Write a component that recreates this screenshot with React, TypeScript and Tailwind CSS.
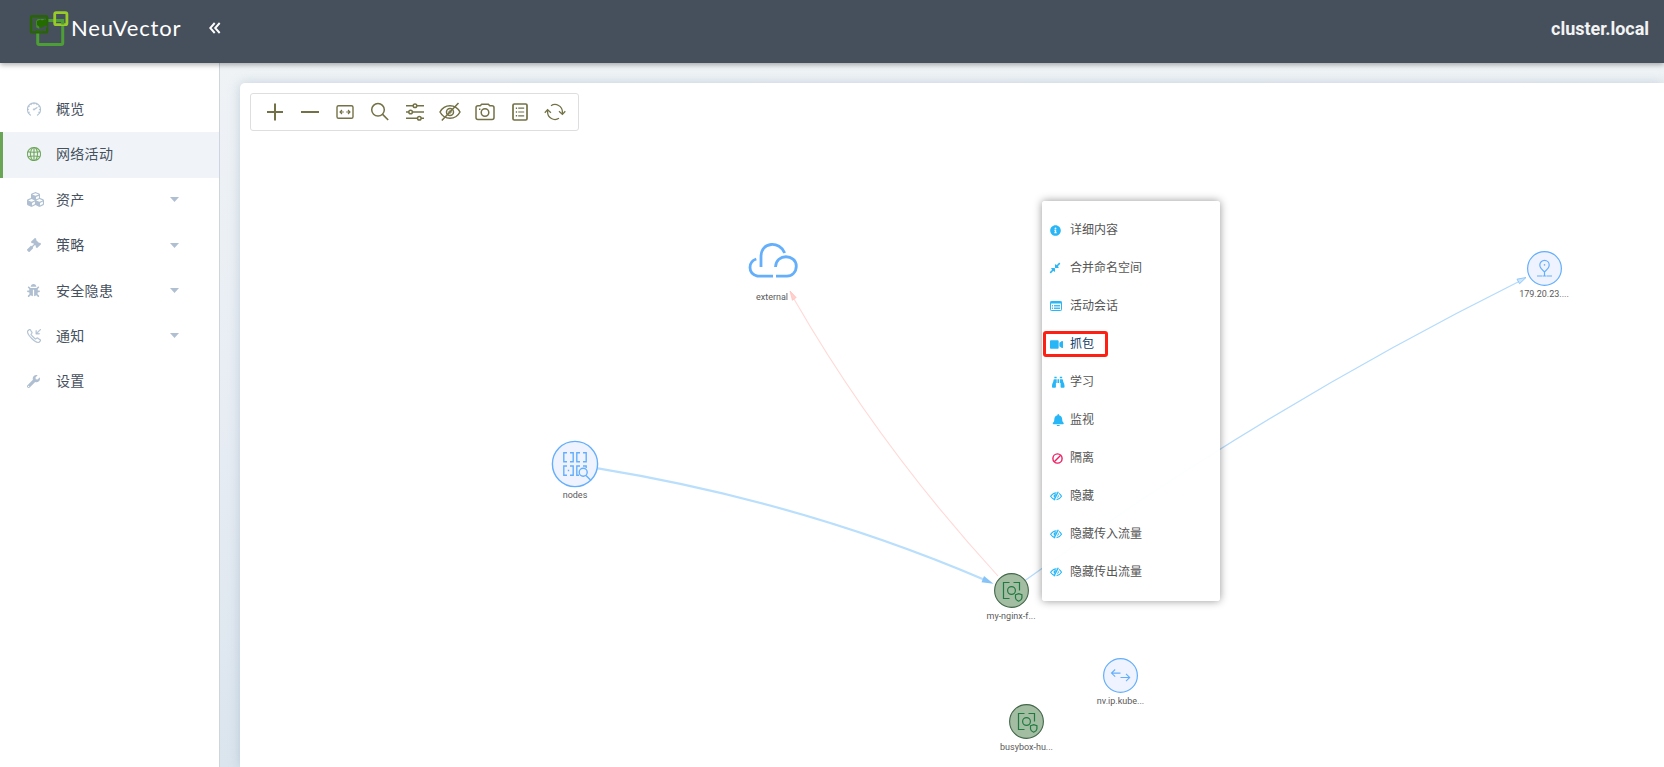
import React from "react";
import { SlSpeedometer, SlGlobe, SlCallIn } from "react-icons/sl";
import {
  FaCubes,
  FaGavel,
  FaBug,
  FaWrench,
  FaInfoCircle,
  FaCompressAlt,
  FaVideo,
  FaBinoculars,
  FaBell,
} from "react-icons/fa";

function Logo() {
  return (
    <svg width="42" height="38" viewBox="0 0 42 38" fill="none">
      <rect x="9.7" y="11.5" width="25" height="24" rx="1.5" stroke="#4d9e36" strokeWidth="3" />
      <rect x="26.7" y="3.7" width="12.2" height="12" rx="1.5" stroke="#98cb27" strokeWidth="2.8" />
      <path d="M28.5 11.5h6.2V15.5" stroke="#4d9e36" strokeWidth="3" />
      <rect x="3" y="7.2" width="16.2" height="16.2" rx="1" fill="#2f6a12" fillOpacity=".25" stroke="#296307" strokeWidth="2.4" />
      <path d="M9 12l3.5-1.5 1.5 1 3-1.5 2 1.5-1 5-5 2.5-4-3z" fill="#256c00" />
      <path d="M7 19l5 2.5 7-4.5" stroke="#46505d" strokeWidth="2" />
      <path d="M8 21.5l4.5 1.5 3-1" stroke="#256c00" strokeWidth="1.6" />
    </svg>
  );
}

function EyeSlash() {
  return (
    <svg width="12" height="12" viewBox="0 0 12 12" fill="none" stroke="currentColor">
      <path d="M5.2 9.6Q2.3 9.1.6 6.2 2.8 2.9 6.6 2.7M9 3.4Q10.6 4.5 11.5 6.2 9.8 9.1 6.5 9.7" strokeWidth="1.1" />
      <path d="M8.3 1.7L4 10.3" strokeWidth="1.3" />
      <path d="M4.4 7.8Q2.8 5.4 4.9 4.2L6.3 4.2zM8.5 5Q9.2 7 7.2 8z" fill="currentColor" strokeWidth=".3" />
    </svg>
  );
}

function ListWindow() {
  return (
    <svg width="12" height="12" viewBox="0 0 12 12" fill="none" stroke="currentColor">
      <rect x=".5" y="1.5" width="11" height="9" rx=".8" />
      <path d="M.5 2.5h11" strokeWidth="2" />
      <path d="M2 5.5h1M4 5.5h6M2 7h1M4 7h6M2 8.5h1M4 8.5h6" strokeWidth=".9" />
    </svg>
  );
}

function Ban() {
  return (
    <svg width="11" height="11" viewBox="0 0 11 11" fill="none" stroke="currentColor" strokeWidth="1.4">
      <circle cx="5.5" cy="5.5" r="4.6" />
      <path d="M8.7 2.3L2.3 8.7" />
    </svg>
  );
}

const navItems = [
  { label: "概览", icon: <SlSpeedometer size={14} stroke="currentColor" strokeWidth={22} />, caret: false },
  { label: "网络活动", icon: <SlGlobe size={14} stroke="currentColor" strokeWidth={14} />, caret: false, active: true },
  { label: "资产", icon: <FaCubes size={17} />, caret: true },
  { label: "策略", icon: <FaGavel size={14} />, caret: true },
  { label: "安全隐患", icon: <FaBug size={13} />, caret: true },
  { label: "通知", icon: <SlCallIn size={14} stroke="currentColor" strokeWidth={22} />, caret: true },
  { label: "设置", icon: <FaWrench size={13} />, caret: false },
];

function Sidebar() {
  return (
    <nav className="flex w-[220px] shrink-0 flex-col border-r border-[#cfd6db] bg-white pt-6">
      {navItems.map((item) => (
        <div
          key={item.label}
          className={
            item.active
              ? "flex h-[46px] items-center border-l-3 border-[#6aa556] bg-[#f0f4f8] pb-[2px] pl-6 text-[#6aa556]"
              : "flex h-[45.3px] items-center pb-[2px] pl-[27px] text-[#afbfd1]"
          }
        >
          <span className="flex w-[29px] items-center">{item.icon}</span>
          <span className="flex-1 text-sm tracking-[0.3px] text-[#46515e]">{item.label}</span>
          {item.caret && (
            <svg className="mr-[40px]" width="9" height="5" viewBox="0 0 9 5" fill="currentColor">
              <path d="M0 0h9L4.5 5z" />
            </svg>
          )}
        </div>
      ))}
    </nav>
  );
}

const tools: React.ReactNode[] = [
  <path d="M3 11h16M11 2.5v17" strokeWidth="2" />,
  <path d="M2 11h18" strokeWidth="2" />,
  <>
    <rect x="3" y="4.7" width="16" height="12.6" rx="1.6" strokeWidth="1.4" />
    <path d="M9.8 11H6M8 9l-2 2 2 2M12.2 11H16M14 9l2 2-2 2" strokeWidth="1.1" />
  </>,
  <>
    <circle cx="9" cy="8.8" r="6.3" />
    <path d="M13.6 13.4l5.6 5.6" strokeWidth="1.6" />
  </>,
  <>
    <path d="M2 4.8h7M13 4.8h7M2 11h2.8M8.5 11H20M2 17.3h11.4M17 17.3h3" />
    <circle cx="11" cy="4.8" r="1.8" />
    <circle cx="6.6" cy="11" r="1.8" />
    <circle cx="15.3" cy="17.3" r="1.8" />
  </>,
  <>
    <path d="M1 11C5.5 2.6 16.5 2.6 21 11 16.5 19.4 5.5 19.4 1 11zM19.5 2L2.8 19.6" />
    <circle cx="11" cy="11" r="3.5" />
    <circle cx="11" cy="11" r="1.2" strokeWidth="1" />
  </>,
  <>
    <path d="M4 4.8h2.2l1.5-1.6h6.6l1.5 1.6H18q2 0 2 2v9.7q0 2-2 2H4q-2 0-2-2V6.8q0-2 2-2z" />
    <circle cx="11" cy="11.5" r="3.8" />
    <path d="M5 8.2h1.4" strokeWidth="1.6" />
  </>,
  <>
    <rect x="4" y="3" width="14" height="16" rx="1.3" strokeWidth="1.7" />
    <path d="M9.2 7.2h6M9.2 11h6M9.2 14.8h6" strokeWidth="1.2" />
    <path d="M6.8 7.2h1.3M6.8 11h1.3M6.8 14.8h1.3" />
  </>,
  <g strokeWidth="1.3">
    <path d="M7 4.7A7.4 7.4 0 0 1 18.4 11v2M15 10.2l3.4 3.2 2.9-3.2" />
    <path d="M15 17.3A7.4 7.4 0 0 1 3.6 11V9M.8 11.8l2.8-3.2 3.3 3.2" />
  </g>,
];

function Toolbar() {
  return (
    <div className="absolute top-[10px] left-[10px] flex h-[38px] w-[329px] items-center gap-[13px] rounded-[3px] border border-[#dedede] bg-white pl-[13px]">
      {tools.map((shape, i) => (
        <svg key={i} width="22" height="22" viewBox="0 0 22 22" fill="none" stroke="#737146" strokeWidth="1.5">
          {shape}
        </svg>
      ))}
    </div>
  );
}

function Edges() {
  return (
    <svg className="absolute inset-0" width="1424" height="684" viewBox="240 83 1424 684" fill="none">
      <path d="M598 468.4Q803 502 985 580" stroke="#b9dffc" strokeWidth="2.2" />
      <path d="M993.5 583.7L981.5 582.3 984 576z" fill="#85c3f8" />
      <path d="M794 299Q878 445 998 576" stroke="#ffd9d6" strokeWidth="1.1" />
      <path d="M790 291L796.2 297.5 792.4 300.3z" fill="#ffd0cc" stroke="#ffbdb7" strokeWidth=".7" />
      <path d="M1025 580.5Q1263 409 1520 281" stroke="#b5dbfb" strokeWidth="1.3" />
      <path d="M1526 277.5L1519.6 283.7 1517 279.2z" fill="#cfe7fd" stroke="#85c3f8" strokeWidth=".9" />
    </svg>
  );
}

function Label({ children }: { children: React.ReactNode }) {
  return <span className="text-[9px] leading-[11px] whitespace-nowrap text-[#5a5a5a]">{children}</span>;
}

function ContainerNode() {
  return (
    <svg width="35" height="35" viewBox="-17.5 -17.5 35 35" fill="none" stroke="#1f7a3f" strokeWidth="1.2">
      <circle r="16.9" fill="#a3bda3" stroke="#43684a" strokeWidth="1.1" />
      <path d="M-2-8H-8V8H-2M2-8H8V0" />
      <circle r="3.9" />
      <path d="M4 4.2L7.2 3.2 10.4 4.2V7.5Q10.2 9.5 7.2 10.7 4.2 9.5 4 7.5z" fill="#a3bda3" />
    </svg>
  );
}

function Graph() {
  return (
    <>
      <Edges />
      <div className="absolute top-[158px] left-[492px] flex w-20 flex-col items-center gap-[11px]">
        <svg className="-ml-px" width="52" height="40" viewBox="0 0 52 40" fill="none" stroke="#64affc" strokeWidth="2.8">
          <path d="M10.3 18Q4 20 4 26.5T11.5 35.2H27M15 26V16C15 0 34 0 38.7 12M29.5 26C30 12 50 13 50.3 25 50.3 31 46 35.2 41 35.2H30" />
        </svg>
        <Label>external</Label>
      </div>
      <div className="absolute top-[357px] left-[295px] flex w-20 flex-col items-center gap-[2px]">
        <svg width="48" height="48" viewBox="-24 -24 48 48" fill="none" stroke="#64affc" strokeWidth="1.4">
          <circle r="22.6" fill="#eff3ff" />
          <path d="M-8-11.2H-11.2V-2.2H-8M-5-11.2H-1.8V-2.2H-5M5-11.2H1.8V-2.2H5M8-11.2H11.2V-2.2H8M-8 2H-11.2V11.2H-8M-5 2H-1.8V11.2H-5M4 11.2H1.8V2H5M8 2H11.2V4" />
          <circle cx="8.2" cy="8.3" r="4" />
          <path d="M11 11.5l4.5 4.5M-7.2 6.5h1.4" />
        </svg>
        <Label>nodes</Label>
      </div>
      <div className="absolute top-[490px] left-[731px] flex w-20 flex-col items-center gap-[3px]">
        <ContainerNode />
        <Label>my-nginx-f...</Label>
      </div>
      <div className="absolute top-[575px] left-[840.5px] flex w-20 flex-col items-center gap-[3px]">
        <svg width="35" height="35" viewBox="-17.5 -17.5 35 35" fill="none" stroke="#64affc">
          <circle r="16.9" fill="#eff3ff" strokeWidth="1.2" />
          <path d="M0-2.4H-9M-5.3-6L-9-2.4-5.3 1.2M0 2H9M5.5-1.6L9.2 2 5.5 5.6" strokeWidth="1.1" />
        </svg>
        <Label>nv.ip.kube...</Label>
      </div>
      <div className="absolute top-[621px] left-[746.5px] flex w-20 flex-col items-center gap-[3px]">
        <ContainerNode />
        <Label>busybox-hu...</Label>
      </div>
      <div className="absolute top-[168px] left-[1264px] flex w-20 flex-col items-center gap-[3px]">
        <svg width="35" height="35" viewBox="-17.5 -17.5 35 35" fill="none" stroke="#64affc">
          <circle r="16.9" fill="#eff3ff" strokeWidth="1.2" />
          <path d="M0 7V3.5Q-4.7-.5-4.7-3.4A4.7 4.7 0 0 1 4.7-3.4Q4.7-.5 0 3.5M-7.5 7.5H-2M2 7.5H7.5M-1.6 7.5H1.6" strokeWidth="1.2" />
          <circle cy="-3.6" r=".8" fill="#64affc" stroke="none" />
        </svg>
        <Label>179.20.23....</Label>
      </div>
    </>
  );
}

const menuItems = [
  { label: "详细内容", icon: <FaInfoCircle size={11} /> },
  { label: "合并命名空间", icon: <FaCompressAlt size={12} className="-ml-px" /> },
  { label: "活动会话", icon: <ListWindow /> },
  { label: "抓包", icon: <FaVideo size={13} />, marked: true },
  { label: "学习", icon: <FaBinoculars size={12.5} />, inset: true },
  { label: "监视", icon: <FaBell size={12.5} />, inset: true },
  { label: "隔离", icon: <Ban />, inset: true, danger: true },
  { label: "隐藏", icon: <EyeSlash /> },
  { label: "隐藏传入流量", icon: <EyeSlash /> },
  { label: "隐藏传出流量", icon: <EyeSlash /> },
];

function ContextMenu() {
  return (
    <div className="absolute top-[118px] left-[802px] h-[400px] w-[178px] rounded-[3px] bg-white/95 pt-[10px] shadow-[0_0_8px_rgba(0,0,0,0.42)]">
      {menuItems.map((item) => (
        <div key={item.label} className="relative flex h-[38px] items-center pl-2">
          {item.marked && (
            <span className="absolute top-[6px] left-[1px] h-[26px] w-[65px] rounded-[3px] border-3 border-[#ff2014]" />
          )}
          <span
            className={
              item.danger
                ? "flex w-5 items-center pl-[2px] text-[#ec1f62]"
                : item.inset
                  ? "flex w-5 items-center pl-[2px] text-[#29b6f6]"
                  : "flex w-5 items-center text-[#29b6f6]"
            }
          >
            {item.icon}
          </span>
          <span className={item.marked ? "text-xs text-[#0b3a63]" : "text-xs text-[#555]"}>{item.label}</span>
        </div>
      ))}
    </div>
  );
}

export default function App() {
  return (
    <div className="flex h-[767px] w-[1664px] flex-col overflow-hidden font-['Roboto','Noto_Sans_CJK_SC',sans-serif]">
      <header className="relative z-10 flex h-[63px] shrink-0 items-center bg-[#46505d] pr-[15px] pl-[28px] text-white shadow-[0_2px_5px_rgba(0,0,0,0.3)]">
        <div className="flex w-[181px] items-center pb-[7px]">
          <Logo />
          <span className="ml-px font-['Lato',sans-serif] text-[22px] leading-6 tracking-[0.85px]">NeuVector</span>
        </div>
        <svg className="mb-[7px]" width="12" height="12" viewBox="0 0 12 12" fill="none" stroke="currentColor" strokeWidth="1.9">
          <path d="M5.7 1L1.2 6l4.5 5M10.7 1L6.2 6l4.5 5" />
        </svg>
        <span className="mb-[6px] ml-auto text-lg font-bold tracking-[-0.04px] text-[#f3f3f3]">cluster.local</span>
      </header>
      <div className="flex min-h-0 flex-1">
        <Sidebar />
        <main className="flex min-w-0 flex-1 bg-linear-to-b from-[#eff3f6] via-[#e8edf4] to-[#dbe5ee] pt-5 pl-5">
          <section className="relative flex-1 overflow-hidden rounded-tl-[5px] bg-white shadow-[0_0_12px_rgba(120,150,175,0.36)]">
            <Graph />
            <Toolbar />
            <ContextMenu />
          </section>
        </main>
      </div>
    </div>
  );
}
